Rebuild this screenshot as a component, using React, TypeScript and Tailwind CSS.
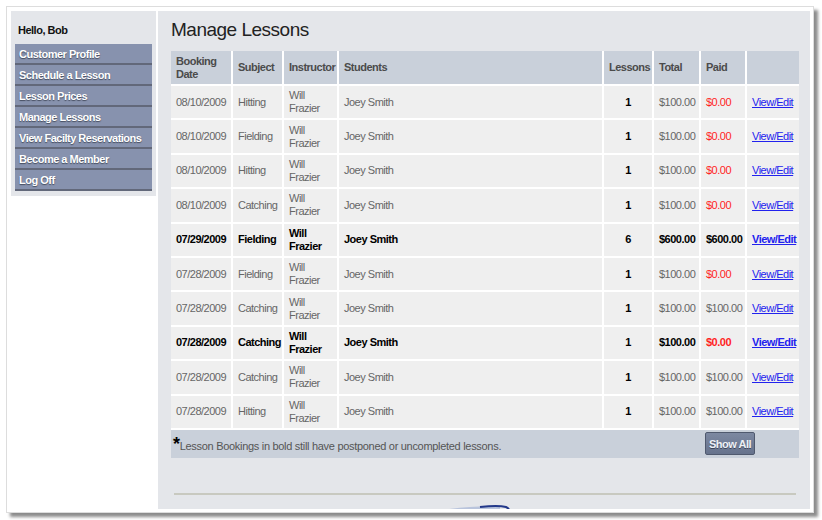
import React from "react";

type Row = {
  d: string;
  s: string;
  n: number;
  t: string;
  p: string;
  red: boolean;
  b: boolean;
};

const rows: Row[] = [
  { d: "08/10/2009", s: "Hitting", n: 1, t: "$100.00", p: "$0.00", red: true, b: false },
  { d: "08/10/2009", s: "Fielding", n: 1, t: "$100.00", p: "$0.00", red: true, b: false },
  { d: "08/10/2009", s: "Hitting", n: 1, t: "$100.00", p: "$0.00", red: true, b: false },
  { d: "08/10/2009", s: "Catching", n: 1, t: "$100.00", p: "$0.00", red: true, b: false },
  { d: "07/29/2009", s: "Fielding", n: 6, t: "$600.00", p: "$600.00", red: false, b: true },
  { d: "07/28/2009", s: "Fielding", n: 1, t: "$100.00", p: "$0.00", red: true, b: false },
  { d: "07/28/2009", s: "Catching", n: 1, t: "$100.00", p: "$100.00", red: false, b: false },
  { d: "07/28/2009", s: "Catching", n: 1, t: "$100.00", p: "$0.00", red: true, b: true },
  { d: "07/28/2009", s: "Catching", n: 1, t: "$100.00", p: "$100.00", red: false, b: false },
  { d: "07/28/2009", s: "Hitting", n: 1, t: "$100.00", p: "$100.00", red: false, b: false },
];

const menu = [
  "Customer Profile",
  "Schedule a Lesson",
  "Lesson Prices",
  "Manage Lessons",
  "View Facilty Reservations",
  "Become a Member",
  "Log Off",
];

const headers = ["Booking Date", "Subject", "Instructor", "Students", "Lessons", "Total", "Paid", ""];

export default function App() {
  return (
    <div className="min-h-[520px] w-[822px] bg-white p-[6px] text-[11px] tracking-[-0.5px] [font-family:'Liberation_Sans',Arial,sans-serif]">
      <div className="flex h-[507px] w-[808px] gap-[2px] border border-[#dddddd] bg-white pt-[4px] pr-[3px] pb-[3px] pl-[4px] shadow-[4px_4px_3px_rgba(0,0,0,0.45)]">
        {/* Sidebar */}
        <aside className="w-[145px] self-start bg-[#e4e6ea] px-[4px] pb-[5px]">
          <div className="h-[33px] pt-[12px] pl-[3px] leading-[14px] font-bold text-[#111]">Hello, Bob</div>
          <nav className="flex flex-col">
            {menu.map((m) => (
              <a
                key={m}
                href="#"
                className="block h-[21px] border-b-2 border-[#62687a] bg-[#8792ae] pl-[4px] leading-[20px] font-bold whitespace-nowrap text-white [text-shadow:0_1px_1px_rgba(40,45,60,0.7)]"
              >
                {m}
              </a>
            ))}
          </nav>
        </aside>

        {/* Main */}
        <main className="h-full w-[652px] overflow-hidden bg-[#e4e6ea] pt-[7px] pr-[11px] pl-[13px]">
          <h1 className="mb-[9px] h-[24px] text-[19px] leading-[24px] font-normal tracking-[-0.5px] text-[#222]">
            Manage Lessons
          </h1>

          <div className="flex flex-col gap-[2px] bg-white">
            <div className="grid grid-cols-[60px_49px_53px_263px_48px_45px_44px_minmax(0,1fr)] grid-rows-[33px_repeat(10,32.4px)] gap-[2px]">
              {headers.map((h, i) => (
                <div
                  key={i}
                  className="flex min-w-0 items-center overflow-hidden bg-[#c9d0da] px-[5px] leading-[13px] font-bold text-[#4b4b4b]"
                >
                  {h}
                </div>
              ))}
              {rows.map((r, i) => {
                const base = r.b ? "font-bold text-black" : "text-[#666666]";
                const cell = "flex min-w-0 items-center overflow-hidden bg-[#efefef] px-[5px] leading-[13px]";
                return (
                  <React.Fragment key={i}>
                    <div className={`${cell} ${base}`}>{r.d}</div>
                    <div className={`${cell} ${base}`}>{r.s}</div>
                    <div className={`${cell} ${base}`}>Will Frazier</div>
                    <div className={`${cell} ${base}`}>Joey Smith</div>
                    <div className={`${cell} justify-center font-bold text-black`}>{r.n}</div>
                    <div className={`${cell} ${base}`}>{r.t}</div>
                    <div
                      className={`${cell} ${r.b ? "font-bold" : ""} ${
                        r.red ? "text-[#ff1f1f]" : r.b ? "text-black" : "text-[#666666]"
                      }`}
                    >
                      {r.p}
                    </div>
                    <div className={`${cell} ${r.b ? "font-bold" : ""}`}>
                      <a href="#" className="whitespace-nowrap text-[#2222ee] underline">
                        View/Edit
                      </a>
                    </div>
                  </React.Fragment>
                );
              })}
            </div>
            <div className="flex h-[28px] items-center justify-between bg-[#c9d0da] pr-[44px] pl-[2px]">
              <p className="pt-[2px] whitespace-nowrap tracking-[-0.3px] text-[#555]">
                <span className="text-[18px] font-bold text-black">*</span>Lesson Bookings in bold still have postponed or uncompleted lessons.
              </p>
              <button className="h-[23px] w-[50px] rounded-[2px] border border-[#4f596e] bg-gradient-to-b from-[#7c88a1] to-[#66728c] font-bold whitespace-nowrap text-[#eef1f6] [text-shadow:0_1px_0_rgba(30,35,50,0.6)]">
                Show All
              </button>
            </div>
          </div>

          <div className="mx-[3px] mt-[35px] h-[2px] bg-[#c8c9c0]" />

          <div className="mt-[10px] ml-[265px]">
            <svg width="76" height="14" viewBox="0 0 76 14">
              <path d="M0 6 Q36 0 64 1.5 L64 5 Q36 4 0 9 Z" fill="#b9c4dc" />
              <path d="M44 2 Q62 0 70 2 Q74 4 74 8" fill="none" stroke="#23398a" strokeWidth="2" />
            </svg>
          </div>
        </main>
      </div>
    </div>
  );
}
